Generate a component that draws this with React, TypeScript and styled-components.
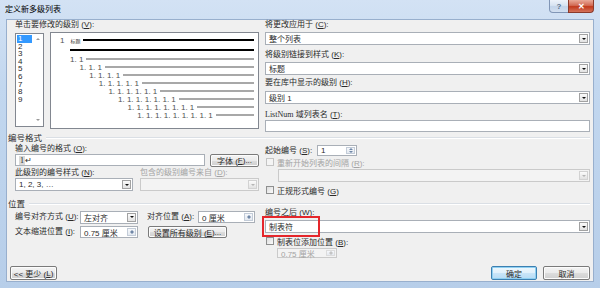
import styled, { createGlobalStyle } from "styled-components";

const GlobalStyle = createGlobalStyle`
  html, body {
    margin: 0;
    padding: 0;
  }
  body {
    width: 600px;
    height: 288px;
    overflow: hidden;
    background: #b9cfe9;
    font-family: "Liberation Sans", "Noto Sans CJK SC", sans-serif;
    color: #2a2a2a;
  }
`;

const Window = styled.div`
  width: 600px;
  height: 288px;
  display: flex;
  flex-direction: column;
  background: linear-gradient(180deg, #d3e2f4 0%, #c2d7ef 30%, #b7cee9 100%);
`;

const TitleBar = styled.div`
  height: 19px;
  flex: none;
  display: flex;
  align-items: flex-start;
  justify-content: space-between;
  padding: 0 6px 0 5px;
`;

const Title = styled.span`
  font-size: 8px;
  line-height: 19px;
  color: #000;
`;

const Captions = styled.div`
  display: flex;
`;

const CaptionButton = styled.div<{ $close?: boolean }>`
  box-sizing: border-box;
  width: ${(p) => (p.$close ? 26 : 20)}px;
  height: 13px;
  display: flex;
  align-items: center;
  justify-content: center;
  font-size: 8px;
  font-weight: bold;
  color: ${(p) => (p.$close ? "#fff" : "#5a6f8c")};
  border: 1px solid ${(p) => (p.$close ? "#8b3a2b" : "#8196b6")};
  border-top: none;
  background: ${(p) =>
    p.$close
      ? "linear-gradient(180deg, #e9a999 0%, #d26b55 45%, #c2391d 55%, #d4735b 100%)"
      : "linear-gradient(180deg, #eef3fa 0%, #d8e4f2 45%, #c3d4ea 55%, #d3e0f0 100%)"};
  border-radius: ${(p) => (p.$close ? "0 0 4px 0" : "0 0 0 4px")};
  margin-left: ${(p) => (p.$close ? -1 : 0)}px;
`;

const Frame = styled.div`
  flex: 1;
  display: flex;
  padding: 0 6px 6px 6px;
`;

const Client = styled.div`
  flex: 1;
  position: relative;
  display: flex;
  flex-direction: column;
  background: #f0f0f0;
  border: 1px solid #98afcd;
  padding: 0 3px 1px 1px;
  font-size: 8px;
`;

const Columns = styled.div<{ $h: number }>`
  display: grid;
  grid-template-columns: 244px 325px;
  column-gap: 6px;
  margin-left: 7px;
  height: ${(p) => p.$h}px;
`;

const Column = styled.div`
  position: relative;
  display: flex;
  flex-direction: column;
`;

const Label = styled.div<{ $mt?: number; $ml?: number; $disabled?: boolean; $w?: number }>`
  height: 10px;
  line-height: 10px;
  margin-top: ${(p) => p.$mt ?? 0}px;
  margin-left: ${(p) => p.$ml ?? 0}px;
  white-space: nowrap;
  color: ${(p) => (p.$disabled ? "#a3a3a3" : "inherit")};
  width: ${(p) => (p.$w ? `${p.$w}px` : "auto")};
  flex: none;
`;

const Key = styled.span`
  text-decoration: underline;
  text-underline-offset: 1px;
`;

const Mono = styled.span`
  font-family: "Liberation Serif", "Noto Sans CJK SC", serif;
`;

const SectionHeader = styled.div`
  height: 10px;
  display: flex;
  align-items: center;
  gap: 4px;
  font-size: 8.5px;
  &::after {
    content: "";
    flex: 1;
    height: 1px;
    background: #dadfe5;
    box-shadow: 0 1px 0 #fff;
  }
`;

const LevelArea = styled.div`
  display: flex;
  gap: 6px;
  margin-top: 2px;
`;

const ListBox = styled.div`
  box-sizing: border-box;
  width: 29px;
  height: 94px;
  margin-top: 1px;
  border: 1px solid #828790;
  background: #fff;
  display: flex;
`;

const ListItems = styled.div`
  flex: 1;
  padding: 1px 1px;
`;

const ListItem = styled.div<{ $selected?: boolean }>`
  height: 7.6px;
  line-height: 7.6px;
  padding-left: 1px;
  font-size: 8px;
  background: ${(p) => (p.$selected ? "#3399ff" : "transparent")};
  color: ${(p) => (p.$selected ? "#fff" : "inherit")};
`;

const ScrollTrack = styled.div`
  width: 10px;
  display: flex;
  flex-direction: column;
  justify-content: space-between;
  align-items: center;
  padding: 4px 0 5px;
`;

const Arrow = styled.span<{ $up?: boolean; $color?: string }>`
  width: 0;
  height: 0;
  border-left: 2px solid transparent;
  border-right: 2px solid transparent;
  ${(p) =>
    p.$up
      ? `border-bottom: 2px solid ${p.$color ?? "#9a9a9a"};`
      : `border-top: 2px solid ${p.$color ?? "#9a9a9a"};`}
`;

const Preview = styled.div`
  box-sizing: border-box;
  width: 209px;
  height: 97px;
  border: 1px solid #828790;
  background: #fff;
  padding: 3px 4px 0 0;
  display: flex;
  flex-direction: column;
`;

const PreviewRow = styled.div<{ $indent: number; $mt?: number }>`
  display: flex;
  align-items: center;
  height: 8px;
  margin-top: ${(p) => p.$mt ?? 0}px;
  padding-left: ${(p) => p.$indent}px;
  font-size: 8px;
  color: #505050;
  white-space: nowrap;
`;

const TinyText = styled.span`
  font-size: 5px;
  margin-left: 6px;
  color: #333;
`;

const LevelLine = styled.span<{ $strong?: boolean }>`
  flex: 1;
  height: 2px;
  margin-left: 3px;
  background: ${(p) => (p.$strong ? "#000" : "#a8a8a8")};
`;

const ThickRule = styled.div<{ $indent: number }>`
  height: 2px;
  margin: 5px 0 0 ${(p) => p.$indent}px;
  background: #000;
`;

const Box = styled.div<{ $w?: number; $h?: number; $mt?: number; $ml?: number; $disabled?: boolean }>`
  box-sizing: border-box;
  flex: none;
  width: ${(p) => (p.$w ? `${p.$w}px` : "auto")};
  height: ${(p) => p.$h ?? 13}px;
  margin-top: ${(p) => p.$mt ?? 0}px;
  margin-left: ${(p) => p.$ml ?? 0}px;
  border: 1px solid ${(p) => (p.$disabled ? "#cacaca" : "#a9afb7")};
  background: ${(p) => (p.$disabled ? "#f3f3f3" : "#fff")};
  color: ${(p) => (p.$disabled ? "#a3a3a3" : "inherit")};
  display: flex;
  align-items: center;
  justify-content: space-between;
  padding: 0 1px 0 3px;
  white-space: nowrap;
`;

const DropButton = styled.span<{ $disabled?: boolean }>`
  box-sizing: border-box;
  width: 9px;
  height: 9px;
  border: 1px solid ${(p) => (p.$disabled ? "#d2d2d2" : "#a2a2a2")};
  background: linear-gradient(180deg, #fbfbfb, #e2e2e2);
  display: flex;
  align-items: center;
  justify-content: center;
`;

const SpinButtons = styled.span<{ $disabled?: boolean }>`
  box-sizing: border-box;
  width: 9px;
  align-self: stretch;
  margin: 1px 0;
  border: 1px solid ${(p) => (p.$disabled ? "#dcdcdc" : "#c3ccd8")};
  background: linear-gradient(180deg, #f6f8fb, #e4e9f0);
  display: flex;
  flex-direction: column;
  align-items: center;
  justify-content: space-evenly;
`;

const Button = styled.div<{ $w: number; $h?: number; $ml?: number; $default?: boolean }>`
  box-sizing: border-box;
  flex: none;
  width: ${(p) => p.$w}px;
  height: ${(p) => p.$h ?? 14}px;
  margin-left: ${(p) => p.$ml ?? 0}px;
  border: 1px solid ${(p) => (p.$default ? "#3c7fb1" : "#7a7a7a")};
  border-radius: 2px;
  background: ${(p) =>
    p.$default
      ? "linear-gradient(180deg, #eef7fd 0%, #e0f0fb 50%, #c9e5f8 51%, #b7dcf5 100%)"
      : "linear-gradient(180deg, #f4f4f4 0%, #ebebeb 50%, #dddddd 51%, #cfcfcf 100%)"};
  box-shadow: ${(p) => (p.$default ? "inset 0 0 0 1px #8fd0f2" : "inset 0 0 0 1px #fcfcfc")};
  display: flex;
  align-items: center;
  justify-content: center;
  white-space: nowrap;
`;

const Row = styled.div<{ $mt?: number; $h?: number }>`
  display: flex;
  align-items: center;
  height: ${(p) => p.$h ?? 12}px;
  margin-top: ${(p) => p.$mt ?? 0}px;
`;

const SubGrid = styled.div`
  display: grid;
  grid-template-columns: 118px 119px;
  column-gap: 7px;
  margin-top: 2px;
`;

const CheckRow = styled.div<{ $mt?: number; $disabled?: boolean }>`
  display: flex;
  align-items: center;
  gap: 3px;
  height: 10px;
  margin-top: ${(p) => p.$mt ?? 0}px;
  margin-left: 1px;
  color: ${(p) => (p.$disabled ? "#a3a3a3" : "inherit")};
  white-space: nowrap;
`;

const CheckBox = styled.span<{ $disabled?: boolean }>`
  box-sizing: border-box;
  width: 8px;
  height: 8px;
  border: 1px solid ${(p) => (p.$disabled ? "#c4c4c4" : "#8e8f8f")};
  background: ${(p) => (p.$disabled ? "#f4f4f4" : "linear-gradient(135deg, #dcdcdc, #fbfbfb)")};
`;

const FormatField = styled.span`
  font-family: "Liberation Serif", serif;
  background: #d9d9d9;
  padding: 0 1px;
  line-height: 8px;
`;

const Highlight = styled.div`
  position: absolute;
  left: -3px;
  top: 8px;
  width: 58px;
  height: 21px;
  box-sizing: border-box;
  border: 2px solid #e5262b;
  pointer-events: none;
`;

const BottomBar = styled.div`
  margin-top: auto;
  display: flex;
  align-items: center;
  justify-content: space-between;
  padding-left: 2px;
`;

const ButtonGroup = styled.div`
  display: flex;
  gap: 6px;
`;

function Select({ value, w, mt, ml, disabled }: { value: string; w?: number; mt?: number; ml?: number; disabled?: boolean }) {
  return (
    <Box $w={w} $mt={mt} $ml={ml} $disabled={disabled}>
      <span>{value}</span>
      <DropButton $disabled={disabled}>
        <Arrow $color={disabled ? "#b5b5b5" : "#111"} />
      </DropButton>
    </Box>
  );
}

function Spinner({ value, w, h, mt, ml, disabled }: { value: string; w: number; h?: number; mt?: number; ml?: number; disabled?: boolean }) {
  const c = disabled ? "#c4c4c4" : "#6f86a6";
  return (
    <Box $w={w} $h={h ?? 12} $mt={mt} $ml={ml} $disabled={disabled}>
      <span>{value}</span>
      <SpinButtons $disabled={disabled}>
        <Arrow $up $color={c} />
        <Arrow $color={c} />
      </SpinButtons>
    </Box>
  );
}

// label text with its access key, e.g. "单击要修改的级别 (V):"
function Caption({ text, k, colon = true }: { text: string; k: string; colon?: boolean }) {
  return (
    <>
      {text} (<Key>{k}</Key>){colon ? ":" : ""}
    </>
  );
}

const levels = Array.from({ length: 9 }, (_, i) => String(i + 1));
const subLevels = Array.from({ length: 8 }, (_, i) => Array(i + 2).fill("1").join(". "));

export default function App() {
  return (
    <>
      <GlobalStyle />
      <Window>
        <TitleBar>
          <Title>定义新多级列表</Title>
          <Captions>
            <CaptionButton>?</CaptionButton>
            <CaptionButton $close>✕</CaptionButton>
          </Captions>
        </TitleBar>
        <Frame>
          <Client>
            <Columns $h={112}>
              <Column>
                <Label>
                  <Caption text="单击要修改的级别" k="V" />
                </Label>
                <LevelArea>
                  <ListBox>
                    <ListItems>
                      {levels.map((l) => (
                        <ListItem key={l} $selected={l === "1"}>
                          {l}
                        </ListItem>
                      ))}
                    </ListItems>
                    <ScrollTrack>
                      <Arrow $up />
                      <Arrow />
                    </ScrollTrack>
                  </ListBox>
                  <Preview>
                    <PreviewRow $indent={9}>
                      1<TinyText>标题</TinyText>
                      <LevelLine $strong />
                    </PreviewRow>
                    <ThickRule $indent={19} />
                    {subLevels.map((n, k) => (
                      <PreviewRow key={n} $indent={19 + 9.6 * k} $mt={k === 0 ? 4 : 0}>
                        {n}
                        <LevelLine />
                      </PreviewRow>
                    ))}
                  </Preview>
                </LevelArea>
              </Column>
              <Column>
                <Label>
                  <Caption text="将更改应用于" k="C" />
                </Label>
                <Select value="整个列表" mt={2} />
                <Label $mt={5}>
                  <Caption text="将级别链接到样式" k="K" />
                </Label>
                <Select value="标题" mt={2} />
                <Label $mt={3}>
                  <Caption text="要在库中显示的级别" k="H" />
                </Label>
                <Select value="级别 1" mt={3} />
                <Label $mt={6}>
                  <Mono>ListNum</Mono> <Caption text="域列表名" k="T" />
                </Label>
                <Box $h={12} />
              </Column>
            </Columns>

            <SectionHeader>编号格式</SectionHeader>
            <Columns $h={56}>
              <Column>
                <Label $mt={2}>
                  <Caption text="输入编号的格式" k="O" />
                </Label>
                <Row>
                  <Box $w={190} $h={12}>
                    <span>
                      <FormatField>1</FormatField>↵
                    </span>
                  </Box>
                  <Button $w={49} $h={13} $ml={5}>
                    <Caption text="字体" k="F" colon={false} />
                    ...
                  </Button>
                </Row>
                <SubGrid>
                  <Column>
                    <Label>
                      <Caption text="此级别的编号样式" k="N" />
                    </Label>
                    <Select value="1, 2, 3, …" />
                  </Column>
                  <Column>
                    <Label $disabled>
                      <Caption text="包含的级别编号来自" k="D" />
                    </Label>
                    <Select value="" disabled />
                  </Column>
                </SubGrid>
              </Column>
              <Column>
                <Row $mt={3} $h={11}>
                  <Label $w={52}>
                    <Caption text="起始编号" k="S" />
                  </Label>
                  <Spinner value="1" w={40} h={11} />
                </Row>
                <CheckRow $mt={1} $disabled>
                  <CheckBox $disabled />
                  <span>
                    <Caption text="重新开始列表的间隔" k="R" />
                  </span>
                </CheckRow>
                <Select value="" mt={2} ml={13} disabled />
                <CheckRow $mt={3}>
                  <CheckBox />
                  <span>
                    <Caption text="正规形式编号" k="G" colon={false} />
                  </span>
                </CheckRow>
              </Column>
            </Columns>

            <SectionHeader>位置</SectionHeader>
            <Columns $h={52}>
              <Column>
                <Row $mt={3}>
                  <Label $w={65}>
                    <Caption text="编号对齐方式" k="U" />
                  </Label>
                  <Select value="左对齐" w={58} />
                  <Label $w={51} $ml={9}>
                    <Caption text="对齐位置" k="A" />
                  </Label>
                  <Spinner value="0 厘米" w={57} />
                </Row>
                <Row $mt={3}>
                  <Label $w={65}>
                    <Caption text="文本缩进位置" k="I" />
                  </Label>
                  <Spinner value="0.75 厘米" w={58} />
                  <Button $w={79} $h={12} $ml={10}>
                    <Caption text="设置所有级别" k="E" colon={false} />
                    ...
                  </Button>
                </Row>
              </Column>
              <Column>
                <Label>
                  <Caption text="编号之后" k="W" />
                </Label>
                <Select value="制表符" mt={2} />
                <CheckRow $mt={3}>
                  <CheckBox />
                  <span>
                    <Caption text="制表位添加位置" k="B" />
                  </span>
                </CheckRow>
                <Spinner value="0.75 厘米" w={60} h={10} mt={2} ml={12} disabled />
                <Highlight />
              </Column>
            </Columns>

            <BottomBar>
              <Button $w={47}>
                &lt;&lt; <Caption text="更少" k="L" colon={false} />
              </Button>
              <ButtonGroup>
                <Button $w={46} $default>
                  确定
                </Button>
                <Button $w={47}>取消</Button>
              </ButtonGroup>
            </BottomBar>
          </Client>
        </Frame>
      </Window>
    </>
  );
}
